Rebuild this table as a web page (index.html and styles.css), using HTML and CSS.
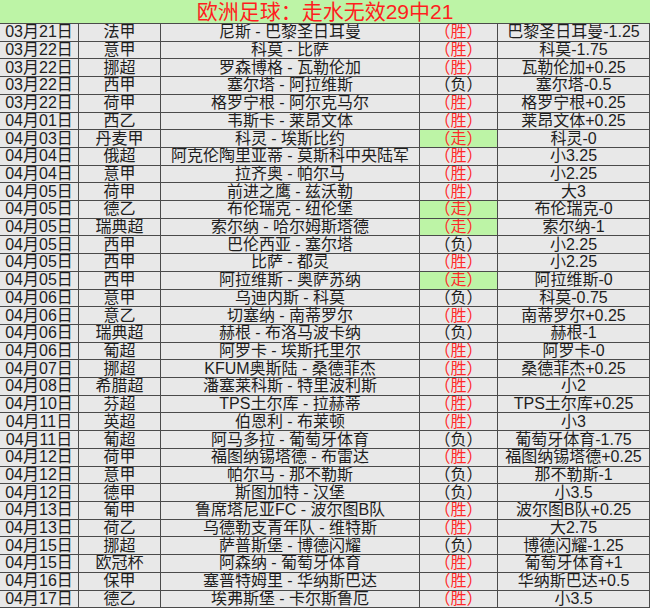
FILE: index.html
```html
<!DOCTYPE html>
<html lang="zh">
<head>
<meta charset="utf-8">
<title>欧洲足球</title>
<link rel="stylesheet" href="styles.css">
</head>
<body>
<div class="sheet">
  <div class="title">欧洲足球：走水无效29中21</div>
  <div class="row"><div>03月21日</div><div>法甲</div><div>尼斯 - 巴黎圣日耳曼</div><div class="win">（胜）</div><div>巴黎圣日耳曼-1.25</div></div>
  <div class="row"><div>03月22日</div><div>意甲</div><div>科莫 - 比萨</div><div class="win">（胜）</div><div>科莫-1.75</div></div>
  <div class="row"><div>03月22日</div><div>挪超</div><div>罗森博格 - 瓦勒伦加</div><div class="win">（胜）</div><div>瓦勒伦加+0.25</div></div>
  <div class="row"><div>03月22日</div><div>西甲</div><div>塞尔塔 - 阿拉维斯</div><div>（负）</div><div>塞尔塔-0.5</div></div>
  <div class="row"><div>03月22日</div><div>荷甲</div><div>格罗宁根 - 阿尔克马尔</div><div class="win">（胜）</div><div>格罗宁根+0.25</div></div>
  <div class="row"><div>04月01日</div><div>西乙</div><div>韦斯卡 - 莱昂文体</div><div class="win">（胜）</div><div>莱昂文体+0.25</div></div>
  <div class="row"><div>04月03日</div><div>丹麦甲</div><div>科灵 - 埃斯比约</div><div class="win push">（走）</div><div>科灵-0</div></div>
  <div class="row"><div>04月04日</div><div>俄超</div><div>阿克伦陶里亚蒂 - 莫斯科中央陆军</div><div class="win">（胜）</div><div>小3.25</div></div>
  <div class="row"><div>04月04日</div><div>意甲</div><div>拉齐奥 - 帕尔马</div><div class="win">（胜）</div><div>小2.25</div></div>
  <div class="row"><div>04月05日</div><div>荷甲</div><div>前进之鹰 - 兹沃勒</div><div class="win">（胜）</div><div>大3</div></div>
  <div class="row"><div>04月05日</div><div>德乙</div><div>布伦瑞克 - 纽伦堡</div><div class="win push">（走）</div><div>布伦瑞克-0</div></div>
  <div class="row"><div>04月05日</div><div>瑞典超</div><div>索尔纳 - 哈尔姆斯塔德</div><div class="win push">（走）</div><div>索尔纳-1</div></div>
  <div class="row"><div>04月05日</div><div>西甲</div><div>巴伦西亚 - 塞尔塔</div><div>（负）</div><div>小2.25</div></div>
  <div class="row"><div>04月05日</div><div>西甲</div><div>比萨 - 都灵</div><div class="win">（胜）</div><div>小2.25</div></div>
  <div class="row"><div>04月05日</div><div>西甲</div><div>阿拉维斯 - 奥萨苏纳</div><div class="win push">（走）</div><div>阿拉维斯-0</div></div>
  <div class="row"><div>04月06日</div><div>意甲</div><div>乌迪内斯 - 科莫</div><div>（负）</div><div>科莫-0.75</div></div>
  <div class="row"><div>04月06日</div><div>意乙</div><div>切塞纳 - 南蒂罗尔</div><div class="win">（胜）</div><div>南蒂罗尔+0.25</div></div>
  <div class="row"><div>04月06日</div><div>瑞典超</div><div>赫根 - 布洛马波卡纳</div><div>（负）</div><div>赫根-1</div></div>
  <div class="row"><div>04月06日</div><div>葡超</div><div>阿罗卡 - 埃斯托里尔</div><div class="win">（胜）</div><div>阿罗卡-0</div></div>
  <div class="row"><div>04月07日</div><div>挪超</div><div>KFUM奥斯陆 - 桑德菲杰</div><div class="win">（胜）</div><div>桑德菲杰+0.25</div></div>
  <div class="row"><div>04月08日</div><div>希腊超</div><div>潘塞莱科斯 - 特里波利斯</div><div class="win">（胜）</div><div>小2</div></div>
  <div class="row"><div>04月10日</div><div>芬超</div><div>TPS土尔库 - 拉赫蒂</div><div class="win">（胜）</div><div>TPS土尔库+0.25</div></div>
  <div class="row"><div>04月11日</div><div>英超</div><div>伯恩利 - 布莱顿</div><div class="win">（胜）</div><div>小3</div></div>
  <div class="row"><div>04月11日</div><div>葡超</div><div>阿马多拉 - 葡萄牙体育</div><div>（负）</div><div>葡萄牙体育-1.75</div></div>
  <div class="row"><div>04月12日</div><div>荷甲</div><div>福图纳锡塔德 - 布雷达</div><div class="win">（胜）</div><div>福图纳锡塔德+0.25</div></div>
  <div class="row"><div>04月12日</div><div>意甲</div><div>帕尔马 - 那不勒斯</div><div>（负）</div><div>那不勒斯-1</div></div>
  <div class="row"><div>04月12日</div><div>德甲</div><div>斯图加特 - 汉堡</div><div>（负）</div><div>小3.5</div></div>
  <div class="row"><div>04月13日</div><div>葡甲</div><div>鲁席塔尼亚FC - 波尔图B队</div><div class="win">（胜）</div><div>波尔图B队+0.25</div></div>
  <div class="row"><div>04月13日</div><div>荷乙</div><div>乌德勒支青年队 - 维特斯</div><div class="win">（胜）</div><div>大2.75</div></div>
  <div class="row"><div>04月15日</div><div>挪超</div><div>萨普斯堡 - 博德闪耀</div><div>（负）</div><div>博德闪耀-1.25</div></div>
  <div class="row"><div>04月15日</div><div>欧冠杯</div><div>阿森纳 - 葡萄牙体育</div><div class="win">（胜）</div><div>葡萄牙体育+1</div></div>
  <div class="row"><div>04月16日</div><div>保甲</div><div>塞普特姆里 - 华纳斯巴达</div><div class="win">（胜）</div><div>华纳斯巴达+0.5</div></div>
  <div class="row"><div>04月17日</div><div>德乙</div><div>埃弗斯堡 - 卡尔斯鲁厄</div><div class="win">（胜）</div><div>小3.5</div></div>
</div>
</body>
</html>
```

FILE: styles.css
```css
html, body {
  margin: 0;
  padding: 0;
  background: #e6e6e6;
}

.sheet {
  width: 650px;
  height: 608px;
  display: flex;
  flex-direction: column;
  background: #e8e8e8;
  font-family: "Liberation Sans", "Noto Sans CJK SC", sans-serif;
  color: #1e1e1e;
  overflow: hidden;
}

.title {
  height: 24px;
  flex: none;
  box-sizing: border-box;
  background: #bdf4a6;
  color: #ff1e1e;
  font-size: 21px;
  line-height: 23px;
  text-align: center;
  border-bottom: 1px solid #4a4a4a;
}

.row {
  flex: 1 1 0;
  display: grid;
  grid-template-columns: 79px 82px 259px 78px 152px;
  min-height: 0;
}

.row > div {
  box-sizing: border-box;
  border-right: 1px solid #4a4a4a;
  border-bottom: 1px solid #4a4a4a;
  font-size: 16px;
  line-height: 16px;
  text-align: center;
  white-space: nowrap;
  display: flex;
  align-items: center;
  justify-content: center;
  overflow: hidden;
}

.row > .win {
  color: #ff2a2a;
}

.row > .push {
  background: #bdf4a6;
}
```
